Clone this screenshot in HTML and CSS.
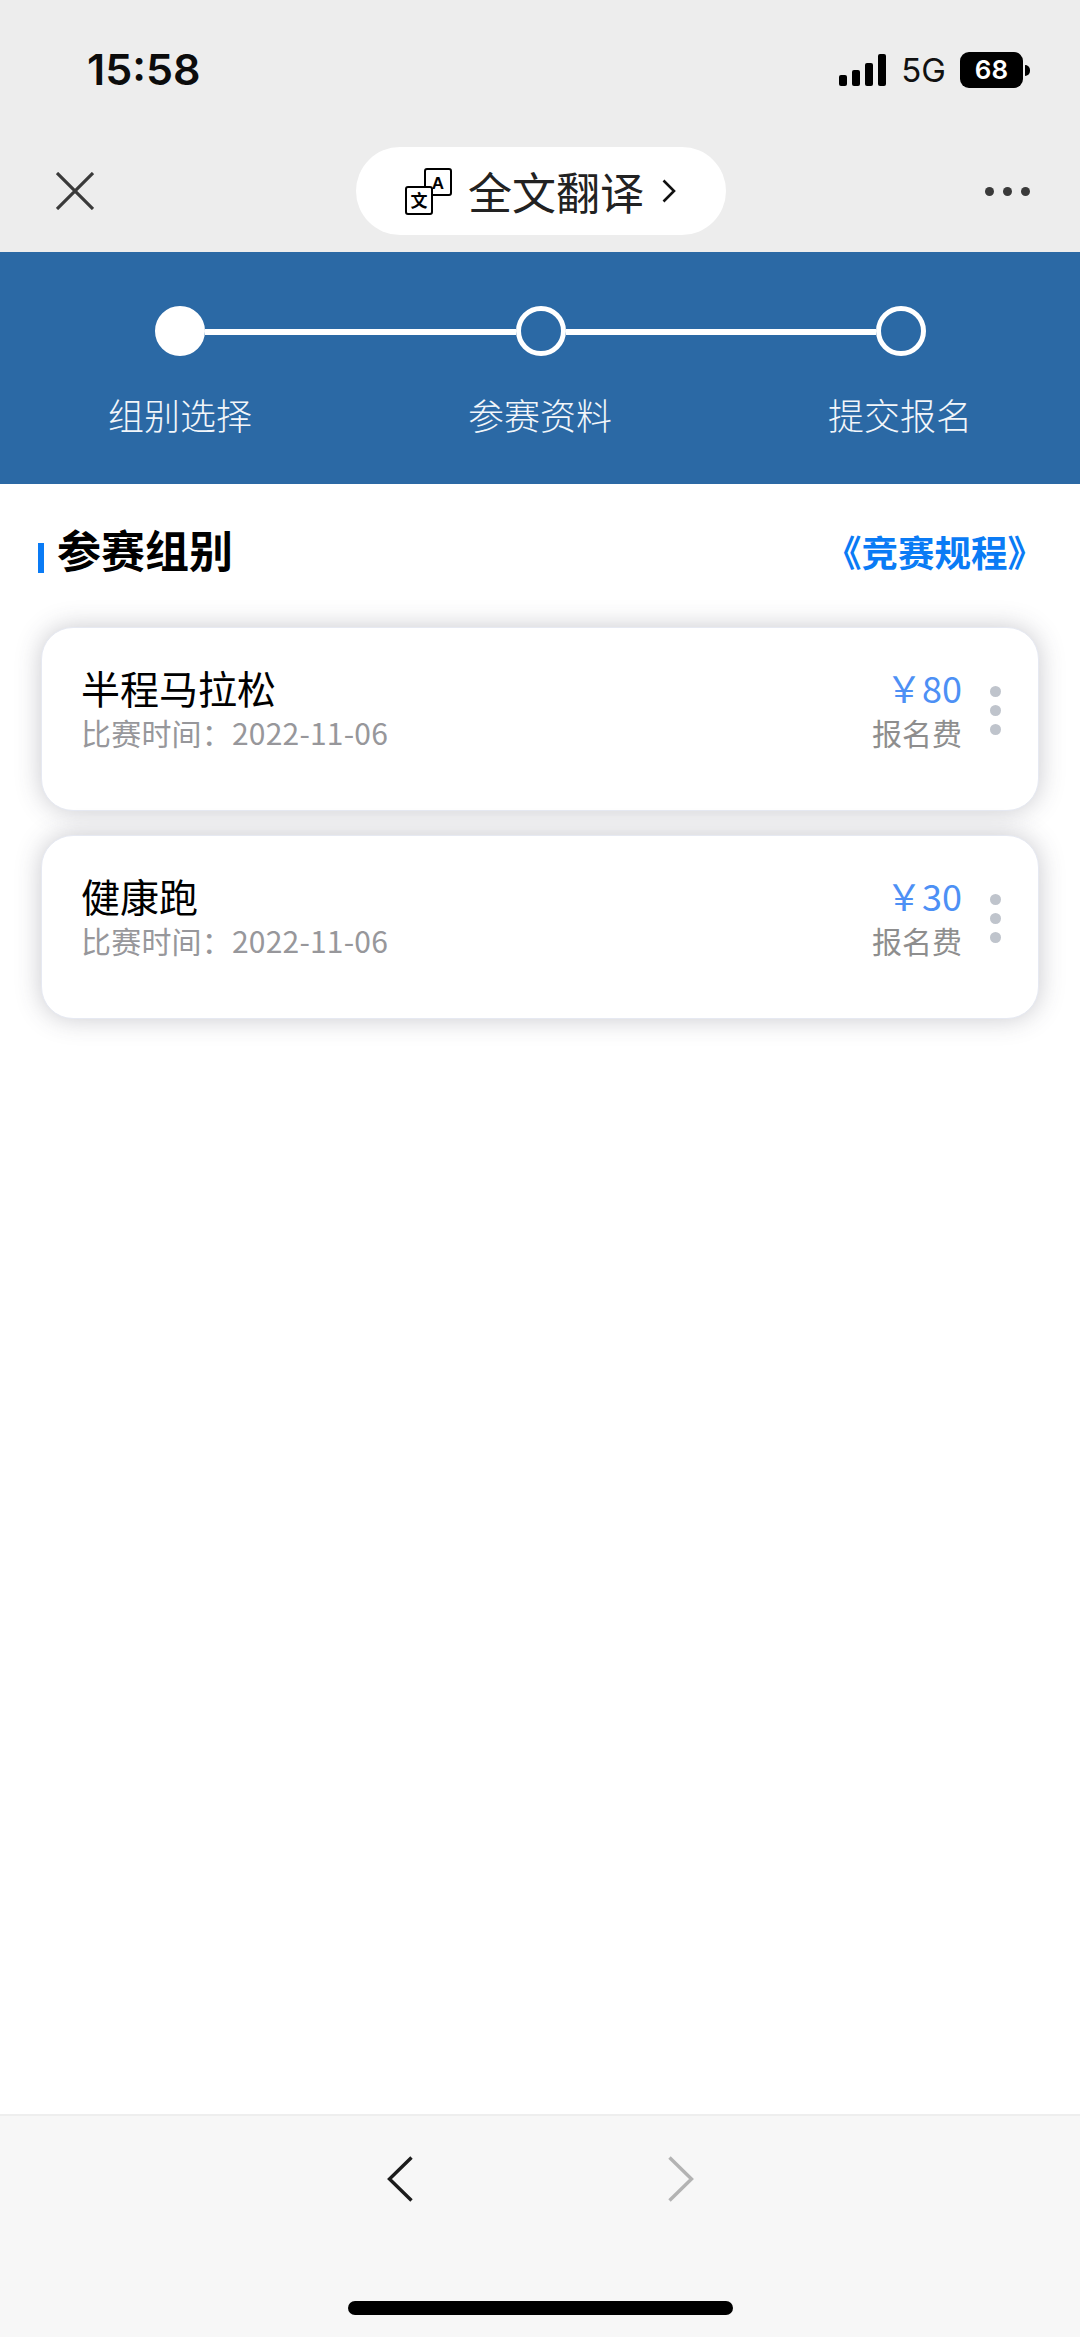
FILE: index.html
```html
<!DOCTYPE html>
<html lang="zh-CN">
<head>
    <meta charset="UTF-8">
    <meta name="viewport" content="width=device-width, initial-scale=1.0">
    <title>参赛组别</title>
    <link rel="stylesheet" href="styles.css">
</head>
<body>
    <div class="page">
        <div class="top">
            <div class="statusbar">
                <div class="time">15:58</div>
                <div class="status-right">
                    <div class="signal"><i class="b1"></i><i class="b2"></i><i class="b3"></i><i class="b4"></i></div>
                    <div class="net">5G</div>
                    <div class="battery">68</div>
                    <div class="nub"></div>
                </div>
            </div>
            <div class="navbar">
                <svg class="close" width="38" height="38" viewBox="0 0 38 38">
                    <path d="M1 1L37 37M37 1L1 37" stroke="#3a3a3a" stroke-width="3.2" fill="none"/>
                </svg>
                <div class="pill">
                    <svg class="trans" width="47" height="47" viewBox="0 0 47 47">
                        <rect x="20" y="1" width="26" height="26" rx="2" fill="#fff" stroke="#000" stroke-width="2"/>
                        <text x="33" y="20.5" text-anchor="middle" class="trans-a">A</text>
                        <rect x="1" y="19" width="26" height="27" rx="2" fill="#fff" stroke="#000" stroke-width="2"/>
                        <text x="14" y="39" text-anchor="middle" class="trans-w">文</text>
                    </svg>
                    <span class="pill-text">全文翻译</span>
                    <svg width="14" height="24" viewBox="0 0 14 24">
                        <path d="M1.5 1.5L12 12L1.5 22.5" stroke="#111" stroke-width="2.6" fill="none"/>
                    </svg>
                </div>
                <div class="more"><i></i><i></i><i></i></div>
            </div>
        </div>

        <div class="steps">
            <div class="track">
                <div class="dot on"></div>
                <div class="line"></div>
                <div class="dot"></div>
                <div class="line"></div>
                <div class="dot"></div>
            </div>
            <div class="labels">
                <div>组别选择</div>
                <div>参赛资料</div>
                <div>提交报名</div>
            </div>
        </div>

        <div class="main">
            <div class="head">
                <div class="title"><span class="bar"></span>参赛组别</div>
                <div class="rules">《竞赛规程》</div>
            </div>
            <div class="cards">
                <div class="card">
                    <div>
                        <div class="name">半程马拉松</div>
                        <div class="date">比赛时间：2022-11-06</div>
                    </div>
                    <div class="card-right">
                        <div class="fee">
                            <div class="price">￥80</div>
                            <div class="fee-label">报名费</div>
                        </div>
                        <div class="kebab"><i></i><i></i><i></i></div>
                    </div>
                </div>
                <div class="card">
                    <div>
                        <div class="name">健康跑</div>
                        <div class="date">比赛时间：2022-11-06</div>
                    </div>
                    <div class="card-right">
                        <div class="fee">
                            <div class="price">￥30</div>
                            <div class="fee-label">报名费</div>
                        </div>
                        <div class="kebab"><i></i><i></i><i></i></div>
                    </div>
                </div>
            </div>
        </div>

        <div class="bottom">
            <div class="arrows">
                <svg width="26" height="46" viewBox="0 0 26 46">
                    <path d="M24.5 1.5L2.5 23L24.5 44.5" stroke="#1c1c1c" stroke-width="3.4" fill="none"/>
                </svg>
                <svg width="26" height="46" viewBox="0 0 26 46">
                    <path d="M1.5 1.5L23.5 23L1.5 44.5" stroke="#b3b3b3" stroke-width="3.4" fill="none"/>
                </svg>
            </div>
            <div class="home"></div>
        </div>
    </div>
</body>
</html>
```
FILE: styles.css
```css
* {
    box-sizing: border-box;
}
body {
    margin: 0;
    font-family: "Noto Sans CJK SC", "Noto Sans", sans-serif;
    background: white;
}
.page {
    width: 1080px;
    height: 2337px;
    display: flex;
    flex-direction: column;
    overflow: hidden;
}

/* status bar + nav */
.top {
    height: 252px;
    background: #ededed;
}
.statusbar {
    height: 147px;
    padding: 47px 50px 0 87px;
    display: flex;
    justify-content: space-between;
    align-items: flex-start;
}
.time {
    font-family: Inter, sans-serif;
    font-size: 43px;
    font-weight: 600;
    line-height: 44px;
    color: #0c0c0c;
}
.status-right {
    display: flex;
    align-items: center;
    height: 44px;
    margin-top: 1px;
}
.signal {
    display: flex;
    align-items: flex-end;
    gap: 5px;
    height: 32px;
}
.signal i {
    width: 8px;
    background: #000;
    border-radius: 2px;
}
.b1 { height: 11px; }
.b2 { height: 16px; }
.b3 { height: 23px; }
.b4 { height: 32px; }
.net {
    font-family: Inter, sans-serif;
    font-size: 33px;
    color: #111;
    margin-left: 15px;
    line-height: 44px;
}
.battery {
    width: 63px;
    height: 36px;
    margin-left: 14px;
    background: #000;
    border-radius: 9px;
    color: white;
    font-family: Inter, sans-serif;
    font-size: 26px;
    font-weight: 600;
    line-height: 36px;
    text-align: center;
}
.nub {
    width: 5px;
    height: 11px;
    margin-left: 2px;
    background: #000;
    border-radius: 0 5px 5px 0;
}
.navbar {
    height: 105px;
    padding: 0 50px 17px 56px;
    display: flex;
    justify-content: space-between;
    align-items: center;
}
.pill {
    width: 370px;
    height: 88px;
    margin-left: 3px;
    background: white;
    border-radius: 44px;
    padding-left: 49px;
    display: flex;
    align-items: center;
}
.trans {
    margin-right: 16px;
}
.trans-a {
    font-family: "Liberation Sans", sans-serif;
    font-size: 17px;
    font-weight: bold;
}
.trans-w {
    font-family: "Noto Sans CJK SC", sans-serif;
    font-size: 17px;
    font-weight: bold;
}
.pill-text {
    font-size: 44px;
    line-height: 60px;
    color: #222;
    margin-right: 18px;
}
.more {
    display: flex;
    gap: 9px;
}
.more i {
    width: 9px;
    height: 9px;
    background: #3a3a3a;
    border-radius: 50%;
}

/* step header */
.steps {
    height: 232px;
    background: #2b69a5;
    padding-top: 54px;
}
.track {
    display: flex;
    align-items: center;
    padding: 0 154px 0 155px;
}
.dot {
    width: 50px;
    height: 50px;
    border: 5px solid white;
    border-radius: 50%;
}
.dot.on {
    background: white;
}
.line {
    flex: 1;
    height: 6px;
    margin-top: 2px;
    background: white;
}
.labels {
    display: grid;
    grid-template-columns: repeat(3, 1fr);
    margin-top: 33px;
    color: #f2f6fa;
    font-size: 36px;
    font-weight: 300;
    line-height: 50px;
    text-align: center;
}

/* content */
.main {
    flex: 1;
}
.head {
    display: flex;
    justify-content: space-between;
    align-items: flex-start;
    padding: 40px 36px 0 38px;
}
.title {
    display: flex;
    align-items: flex-end;
    font-size: 44px;
    font-weight: bold;
    line-height: 50px;
    color: #000;
}
.bar {
    width: 6px;
    height: 30px;
    background: #0a7bf5;
    margin-right: 13px;
    margin-bottom: 1px;
}
.rules {
    font-size: 36.5px;
    font-weight: bold;
    line-height: 50px;
    margin-top: 3px;
    color: #0a7bf5;
}
.cards {
    margin-top: 50px;
    padding: 0 41px;
    display: flex;
    flex-direction: column;
    gap: 24px;
}
.card {
    height: 184px;
    background: white;
    border: 1px solid #e6e9f2;
    border-radius: 32px;
    box-shadow: 0 0 26px rgba(60, 60, 80, 0.28);
    padding: 37px 37px 0 39px;
    display: flex;
    justify-content: space-between;
}
.name {
    font-size: 39px;
    line-height: 45px;
    color: #000;
}
.date {
    font-size: 30px;
    line-height: 44px;
    letter-spacing: 0.2px;
    color: #97979b;
}
.card-right {
    display: flex;
    gap: 28px;
}
.fee {
    text-align: right;
}
.price {
    font-size: 36px;
    line-height: 45px;
    color: #4d90f5;
}
.fee-label {
    font-size: 30px;
    line-height: 44px;
    color: #8e8e8e;
}
.kebab {
    display: flex;
    flex-direction: column;
    gap: 8px;
    padding-top: 21px;
}
.kebab i {
    width: 11px;
    height: 11px;
    background: #bfc4cc;
    border-radius: 50%;
}

/* bottom toolbar */
.bottom {
    height: 223px;
    background: #f7f7f7;
    border-top: 2px solid #eeeeee;
    padding-top: 40px;
}
.arrows {
    display: flex;
    justify-content: center;
    gap: 255px;
}
.home {
    width: 385px;
    height: 14px;
    margin: 99px auto 0;
    background: #000;
    border-radius: 7px;
}
```
